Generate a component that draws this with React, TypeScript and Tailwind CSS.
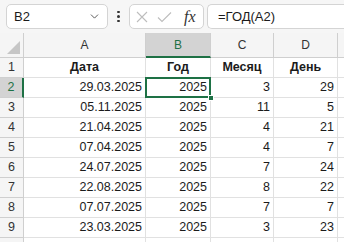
import { ChevronDown } from "lucide-react";

const rows = [
  ["29.03.2025", "2025", "3", "29"],
  ["05.11.2025", "2025", "11", "5"],
  ["21.04.2025", "2025", "4", "21"],
  ["07.04.2025", "2025", "4", "7"],
  ["24.07.2025", "2025", "7", "24"],
  ["22.08.2025", "2025", "8", "22"],
  ["07.07.2025", "2025", "7", "7"],
  ["23.03.2025", "2025", "3", "23"],
];

const cols = "grid grid-cols-[24px_122px_65px_63px_64px_1fr]";
const cell = "border-r border-b border-[#e1e1e1] flex items-center";

export default function App() {
  return (
    <div className="w-[344px] h-[242px] overflow-hidden bg-white text-[#1b1b1b] font-['Liberation_Sans',Arial,sans-serif]">
      {/* formula bar */}
      <div className="h-[33px] bg-[#f6f6f6] flex items-center pl-[6px] gap-0">
        <div className="w-[102px] h-[25px] bg-white border border-[#d4d4d4] rounded-[5px] flex items-center pl-[7px] pr-[6px] text-[13px]">
          <span className="flex-1">B2</span>
          <ChevronDown size={13} strokeWidth={1.6} className="text-[#444]" />
        </div>
        <div className="w-[21px] flex flex-col items-center gap-[2px]">
          <span className="w-[2.5px] h-[2.5px] rounded-full bg-[#333]" />
          <span className="w-[2.5px] h-[2.5px] rounded-full bg-[#333]" />
          <span className="w-[2.5px] h-[2.5px] rounded-full bg-[#333]" />
        </div>
        <div className="w-[75px] h-[25px] bg-white border border-[#d4d4d4] rounded-[5px] flex items-center pl-[5px] gap-[8px]">
          <svg width="14" height="14" viewBox="0 0 14 14" className="text-[#bdbdbd]">
            <path d="M2 2 L12 12 M12 2 L2 12" stroke="currentColor" strokeWidth="1.1" fill="none" />
          </svg>
          <svg width="15" height="14" viewBox="0 0 15 14" className="text-[#bdbdbd]">
            <path d="M1 7.5 L5 11.5 L14 2.5" stroke="currentColor" strokeWidth="1.1" fill="none" />
          </svg>
          <span className="ml-[4px] italic text-[16px] leading-none text-[#333] font-['Liberation_Serif',serif]">fx</span>
        </div>
        <div className="ml-[3px] flex-1 h-[25px] bg-white border border-[#d4d4d4] border-r-0 rounded-l-[5px] flex items-center pl-[10px] text-[13px]">
          =ГОД(A2)
        </div>
      </div>

      {/* column headers */}
      <div className={`${cols} h-[25px] bg-[#f5f5f5] text-[12px] text-[#333]`}>
        <div className="border-r border-b border-[#cfcfcf] relative">
          <div className="absolute right-[3px] bottom-[3px] w-0 h-0 border-l-[13px] border-l-transparent border-b-[13px] border-b-[#c6c6c6]" />
        </div>
        <div className="border-r border-b border-[#cfcfcf] flex items-center justify-center">A</div>
        <div className="border-r border-b-2 border-r-[#cfcfcf] border-b-[#1e7145] bg-[#d3d3d3] text-[#1e7145] flex items-center justify-center">B</div>
        <div className="border-r border-b border-[#cfcfcf] flex items-center justify-center">C</div>
        <div className="border-r border-b border-[#cfcfcf] flex items-center justify-center">D</div>
        <div className="border-b border-[#cfcfcf]" />
      </div>

      {/* header row */}
      <div className={`${cols} h-[20px] text-[12.5px]`}>
        <div className="bg-[#f5f5f5] border-r border-b border-[#cfcfcf] flex items-center justify-center text-[#333]">1</div>
        <div className={`${cell} justify-center font-bold`}>Дата</div>
        <div className={`${cell} justify-center font-bold`}>Год</div>
        <div className={`${cell} justify-center font-bold`}>Месяц</div>
        <div className={`${cell} justify-center font-bold`}>День</div>
        <div className="border-b border-[#e1e1e1]" />
      </div>

      {rows.map((r, i) => (
        <div key={i} className={`${cols} h-[20px] text-[12.5px]`}>
          {i === 0 ? (
            <div className="bg-[#d3d3d3] border-r-2 border-b border-r-[#1e7145] border-b-[#cfcfcf] flex items-center justify-center text-[#1e7145]">2</div>
          ) : (
            <div className="bg-[#f5f5f5] border-r border-b border-[#cfcfcf] flex items-center justify-center text-[#333]">{i + 2}</div>
          )}
          <div className={`${cell} justify-end pr-[3px]`}>{r[0]}</div>
          {i === 0 ? (
            <div className="relative border-r border-b border-[#e1e1e1] flex items-center justify-end pr-[3px]">
              <div className="absolute -left-px -top-px -right-px -bottom-px border-2 border-[#1e7145]" />
              <div className="absolute -right-[4px] -bottom-[4px] w-[6px] h-[6px] bg-[#1e7145] border border-white" />
              {r[1]}
            </div>
          ) : (
            <div className={`${cell} justify-end pr-[3px]`}>{r[1]}</div>
          )}
          <div className={`${cell} justify-end pr-[3px]`}>{r[2]}</div>
          <div className={`${cell} justify-end pr-[3px]`}>{r[3]}</div>
          <div className="border-b border-[#e1e1e1]" />
        </div>
      ))}

      <div className={`${cols} h-[20px]`}>
        <div className="bg-[#f5f5f5] border-r border-[#cfcfcf]" />
        <div className="border-r border-[#e1e1e1]" />
        <div className="border-r border-[#e1e1e1]" />
        <div className="border-r border-[#e1e1e1]" />
        <div className="border-r border-[#e1e1e1]" />
        <div />
      </div>
    </div>
  );
}
